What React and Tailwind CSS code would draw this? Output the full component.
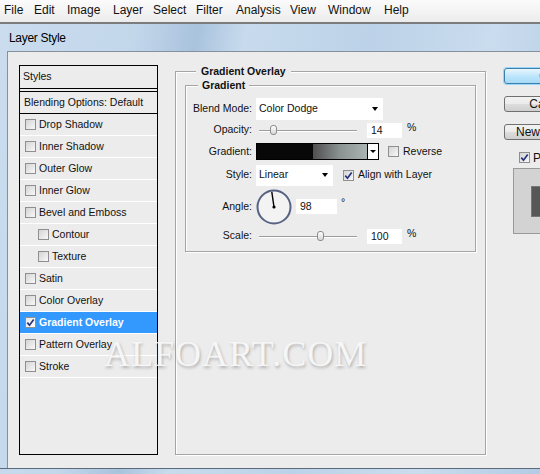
import React from "react";

const menuItems = [
  ["File", "w-[30px]"],
  ["Edit", "w-[33px]"],
  ["Image", "w-[46px]"],
  ["Layer", "w-[40px]"],
  ["Select", "w-[43px]"],
  ["Filter", "w-[40px]"],
  ["Analysis", "w-[54px]"],
  ["View", "w-[38px]"],
  ["Window", "w-[56px]"],
  ["Help", "w-[30px]"],
];

const effects = [
  { label: "Drop Shadow" },
  { label: "Inner Shadow" },
  { label: "Outer Glow" },
  { label: "Inner Glow" },
  { label: "Bevel and Emboss" },
  { label: "Contour", sub: true },
  { label: "Texture", sub: true },
  { label: "Satin" },
  { label: "Color Overlay" },
  { label: "Gradient Overlay", active: true },
  { label: "Pattern Overlay" },
  { label: "Stroke" },
];

function CheckBox({ checked, className = "" }) {
  return (
    <span
      className={`flex h-[11px] w-[11px] shrink-0 items-center justify-center border border-[#8f8f8f] bg-[linear-gradient(135deg,#d4d4d4,#f8f8f8)] ${className}`}
    >
      {checked && (
        <svg width="9" height="9" viewBox="0 0 9 9">
          <path d="M1.3 4.6 L3.5 7.2 L7.7 1.4" fill="none" stroke="#26347d" strokeWidth="1.7" />
        </svg>
      )}
    </span>
  );
}

const Arrow = () => (
  <span className="h-0 w-0 border-x-[3.5px] border-t-[4px] border-x-transparent border-t-black" />
);

function Select({ value, className = "" }) {
  return (
    <div className={`flex items-center justify-between bg-white pl-[3px] pr-[5px] ${className}`}>
      <span>{value}</span>
      <Arrow />
    </div>
  );
}

function Slider({ thumb }) {
  return (
    <div className="relative ml-[3px] flex h-[12px] w-[98px] items-center">
      <div className="h-px w-full bg-[#9c9c9c] shadow-[0_1px_0_#fff]" />
      <div
        className={`absolute top-[1px] h-[10px] w-[7px] rounded-[3px] border border-[#8c8c8c] bg-[linear-gradient(#ffffff,#d6d6d6)] ${thumb}`}
      />
    </div>
  );
}

function Field({ value, className = "" }) {
  return <div className={`h-[15px] bg-white pl-[4px] leading-[15px] ${className}`}>{value}</div>;
}

function Button({ children, focus, className = "" }) {
  return (
    <div
      className={`flex h-[16px] w-[88px] items-center justify-center rounded-[3px] border text-[12px] ${
        focus
          ? "border-[#3c7fb1] bg-[linear-gradient(#eaf6fd,#bee6fd_50%,#a7d9f5)] shadow-[0_0_0_1px_#9bd6f7]"
          : "border-[#707070] bg-[linear-gradient(#f2f2f2,#ebebeb_50%,#dddddd_51%,#cfcfcf)]"
      } ${className}`}
    >
      {children}
    </div>
  );
}

function Row({ label, height, children }) {
  return (
    <div className={`flex items-center gap-[4px] ${height}`}>
      <span className="w-[66px] shrink-0 text-right">{label}</span>
      {children}
    </div>
  );
}

export default function App() {
  return (
    <div className="relative h-[474px] w-[540px] overflow-hidden bg-[#c2d6ea] font-['Liberation_Sans',Arial,sans-serif] text-[10.5px] text-[#111]">
      {/* menu bar */}
      <div className="flex h-[24px] items-center border-b-2 border-[#7c7c7c] bg-[linear-gradient(#fbfbfb,#ececec)] pb-[2px] pl-[4px] text-[12px]">
        {menuItems.map(([name, w]) => (
          <span key={name} className={w}>
            {name}
          </span>
        ))}
      </div>

      {/* window frame */}
      <div className="flex h-[450px] flex-col bg-[linear-gradient(100deg,#cadcee_0%,#c3d7eb_22%,#a9c3dd_32%,#c8dbed_40%,#bcd2e8_60%,#cadcee_80%,#b3cbe4_100%)]">
        <div className="flex h-[27px] items-center pl-[9px] text-[12px] tracking-[-0.3px] text-black">
          Layer Style
        </div>

        <div className="ml-[7px] flex h-[417px] items-start border-l border-t border-[#84909e] bg-[#ececec] pl-[11px] pt-[13px]">
          {/* effects list */}
          <div className="h-[390px] w-[139px] shrink-0 border border-black">
            <div className="flex h-[23px] items-center border-b border-black pl-[3px]">Styles</div>
            <div className="mt-[2px] flex h-[23px] items-center border-y border-black pl-[4px]">
              Blending Options: Default
            </div>
            {effects.map((e) => (
              <div
                key={e.label}
                className={`flex h-[22px] items-center border-b border-white ${
                  e.sub ? "pl-[18px]" : "pl-[5px]"
                } ${e.active ? "bg-[#3399ff] font-bold text-white" : ""}`}
              >
                <CheckBox checked={e.active} className={e.active ? "bg-[linear-gradient(135deg,#e8e8e8,#ffffff)]" : ""} />
                <span className="ml-[3px]">{e.label}</span>
              </div>
            ))}
          </div>

          {/* Gradient Overlay settings */}
          <fieldset className="ml-[17px] h-[390px] w-[311px] shrink-0 border border-[#a5a5a5] px-[9px] shadow-[1px_1px_0_#fff,inset_1px_1px_0_#fff]">
            <legend className="ml-[11px] bg-[#ececec] px-[5px] font-bold leading-[13px]">Gradient Overlay</legend>
            <fieldset className="mt-[1px] border border-[#a5a5a5] pb-[5px] shadow-[1px_1px_0_#fff,inset_1px_1px_0_#fff]">
              <legend className="ml-[12px] bg-[#ececec] px-[4px] font-bold leading-[13px]">Gradient</legend>

              <div className="mt-[6px]">
                <Row label="Blend Mode:" height="h-[22px]">
                  <Select value="Color Dodge" className="h-[22px] w-[127px]" />
                </Row>
                <Row label="Opacity:" height="h-[20px]">
                  <Slider thumb="left-[11px]" />
                  <Field value="14" className="ml-[6px] w-[35px]" />
                  <span className="mb-[4px] ml-[1px]">%</span>
                </Row>
                <Row label="Gradient:" height="h-[23px]">
                  <div className="flex h-[17px] w-[123px] border border-black">
                    <div className="w-[56px] bg-[#080808]" />
                    <div className="flex-1 bg-[linear-gradient(90deg,#4f4f4f,#8b9292_50%,#abb4b4)]" />
                    <div className="flex w-[11px] items-center justify-center border-l border-black bg-white">
                      <span className="h-0 w-0 border-x-[3px] border-t-[3px] border-x-transparent border-t-black" />
                    </div>
                  </div>
                  <CheckBox className="ml-[5px]" />
                  <span>Reverse</span>
                </Row>
                <Row label="Style:" height="h-[24px]">
                  <Select value="Linear" className="h-[21px] w-[77px]" />
                  <CheckBox checked className="ml-[6px] bg-[linear-gradient(135deg,#c9dcf2,#f4f8fd)]" />
                  <span>Align with Layer</span>
                </Row>
                <Row label="Angle:" height="h-[39px]">
                  <svg width="36" height="36" viewBox="0 0 36 36" className="shrink-0">
                    <circle cx="18" cy="18" r="16.5" fill="#f3f3f3" stroke="#566283" strokeWidth="2" />
                    <line x1="18" y1="18" x2="15.8" y2="2.8" stroke="#000" strokeWidth="1.4" />
                    <circle cx="18" cy="18" r="1.6" fill="#000" />
                  </svg>
                  <Field value="98" className="w-[41px]" />
                  <span className="mb-[8px]">°</span>
                </Row>
                <Row label="Scale:" height="h-[20px]">
                  <Slider thumb="left-[58px]" />
                  <Field value="100" className="ml-[6px] w-[35px]" />
                  <span className="mb-[4px] ml-[1px]">%</span>
                </Row>
              </div>
            </fieldset>
          </fieldset>

          {/* dialog buttons */}
          <div className="ml-[18px] mt-[3px] flex shrink-0 flex-col">
            <Button focus>OK</Button>
            <Button className="mt-[12px]">Cancel</Button>
            <Button className="mt-[12px]">New Style...</Button>
            <div className="mt-[11px] flex h-[13px] items-center gap-[3px] pl-[15px] text-[12px]">
              <CheckBox checked className="bg-[linear-gradient(135deg,#c9dcf2,#f4f8fd)]" />
              <span>Preview</span>
            </div>
            <div className="ml-[9px] mt-[4px] flex h-[66px] w-[66px] items-center justify-center border border-[#9a9a9a] bg-[#d3d3d3]">
              <div className="h-[31px] w-[31px] border border-[#777] bg-[#575757]" />
            </div>
          </div>
        </div>

        <div className="h-[6px] border-t border-[#5c6b7c]" />
      </div>

      <div className="absolute left-[104px] top-[336px] font-['Liberation_Serif',serif] text-[36px] leading-[36px] tracking-[1px] text-[#f8f8f8] opacity-85 [text-shadow:1px_2px_3px_rgba(0,0,0,0.3)]">
        ALFOART.COM
      </div>
    </div>
  );
}
